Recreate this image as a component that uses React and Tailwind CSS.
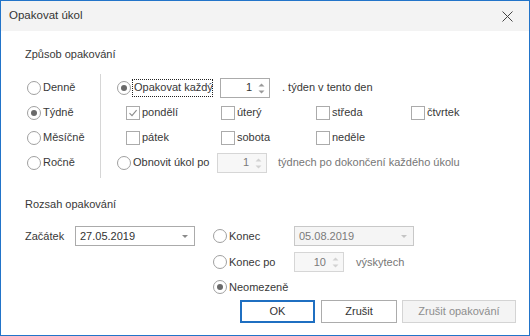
import React from 'react';

// Radio button — gray ring, dark dot when selected
const Radio = ({ checked }) => (
    <span className="flex h-[14px] w-[14px] shrink-0 items-center justify-center rounded-full border border-[#a0a0a0] bg-white">
        {checked && <span className="h-[6px] w-[6px] rounded-full bg-[#6a6a6a]" />}
    </span>
);

const Checkbox = ({ checked }) => (
    <span className="flex h-[14px] w-[14px] shrink-0 items-center justify-center border border-[#ababab] bg-white">
        {checked && (
            <svg width="10" height="10" viewBox="0 0 10 10">
                <path d="M1.5 5.2 L4 7.6 L8.6 2.2" fill="none" stroke="#8c8c8c" strokeWidth="1.1" />
            </svg>
        )}
    </span>
);

const Spinner = ({ value, disabled }) => (
    <div
        className={`relative flex h-[20px] w-[50px] shrink-0 items-center justify-end border pr-[17px] ${
            disabled ? 'border-[#d6d6d6] bg-[#f7f7f7] text-[#7a7a7a]' : 'border-[#ababab] bg-white text-[#333]'
        }`}
    >
        {value}
        <svg className="absolute right-[4px] top-[4px]" width="7" height="11" viewBox="0 0 7 11">
            <path d="M0.5 3.5 L3.5 0.5 L6.5 3.5 Z" fill={disabled ? '#d2d2d2' : '#9a9a9a'} />
            <path d="M0.5 7.5 L3.5 10.5 L6.5 7.5 Z" fill={disabled ? '#d2d2d2' : '#9a9a9a'} />
        </svg>
    </div>
);

const Combo = ({ value, disabled }) => (
    <div
        className={`relative flex h-[20px] w-[120px] shrink-0 items-center border pl-[4px] ${
            disabled ? 'border-[#c8c8c8] bg-[#f5f5f5] text-[#7a7a7a]' : 'border-[#ababab] bg-white text-[#333]'
        }`}
    >
        {value}
        <svg className="absolute right-[6px] top-[8px]" width="6" height="4" viewBox="0 0 6 4">
            <path d="M0 0 L6 0 L3 3 Z" fill={disabled ? '#c4c4c4' : '#8a8a8a'} />
        </svg>
    </div>
);

const days = [
    ['pondělí', true],
    ['úterý', false],
    ['středa', false],
    ['čtvrtek', false],
];
const days2 = ['pátek', 'sobota', 'neděle'];

export default function App() {
    return (
        <div className="flex h-[336px] w-[530px] flex-col whitespace-nowrap border border-[#2274c9] bg-white font-['Liberation_Sans',Arial,sans-serif] text-[11px] text-[#383838]">
            {/* Title bar */}
            <div className="flex h-[30px] shrink-0 items-center justify-between bg-[#f3f3f3] pl-[8px] pr-[16px]">
                <span className="text-[11.5px] text-[#333]">Opakovat úkol</span>
                <svg width="11" height="11" viewBox="0 0 11 11">
                    <path d="M0.5 0.5 L10.5 10.5 M10.5 0.5 L0.5 10.5" stroke="#444" strokeWidth="1" />
                </svg>
            </div>

            <div className="flex flex-col pl-[24px]">
                {/* Způsob opakování */}
                <div className="mt-[15px] h-[16px] leading-[16px]">Způsob opakování</div>

                <div className="mt-[12px] flex">
                    <div className="flex w-[75px] flex-col pt-[1px] pl-[2px]">
                        {[['Denně', false], ['Týdně', true], ['Měsíčně', false], ['Ročně', false]].map(([t, c]) => (
                            <div key={t} className="flex h-[25px] items-center gap-[2px]">
                                <Radio checked={c} />
                                <span>{t}</span>
                            </div>
                        ))}
                    </div>

                    <div className="flex flex-col border-l border-[#d6d6d6] pt-[1px] pb-[3px] pl-[16px]">
                        <div className="flex h-[25px] items-center">
                            <Radio checked />
                            <span className="ml-[1px] flex h-[18px] w-[81px] shrink-0 items-center border border-dotted border-[#222] pl-[1px]">
                                Opakovat každý
                            </span>
                            <div className="ml-[7px]">
                                <Spinner value="1" />
                            </div>
                            <span className="ml-[12px]">. týden v tento den</span>
                        </div>

                        <div className="flex h-[25px] items-center pl-[9px]">
                            {days.map(([d, c]) => (
                                <div key={d} className="flex w-[95px] items-center gap-[2px]">
                                    <Checkbox checked={c} />
                                    <span>{d}</span>
                                </div>
                            ))}
                        </div>

                        <div className="flex h-[25px] items-center pl-[9px]">
                            {days2.map((d) => (
                                <div key={d} className="flex w-[95px] items-center gap-[2px]">
                                    <Checkbox />
                                    <span>{d}</span>
                                </div>
                            ))}
                        </div>

                        <div className="flex h-[25px] items-center">
                            <Radio />
                            <span className="ml-[2px] w-[84px] shrink-0">Obnovit úkol po</span>
                            <Spinner value="1" disabled />
                            <span className="ml-[11px] text-[#767676]">týdnech po dokončení každého úkolu</span>
                        </div>
                    </div>
                </div>

                {/* Rozsah opakování */}
                <div className="mt-[18px] h-[16px] leading-[16px]">Rozsah opakování</div>

                <div className="mt-[11px] flex">
                    <div className="flex h-[26px] items-center">
                        <span className="w-[50px]">Začátek</span>
                        <Combo value="27.05.2019" />
                    </div>

                    <div className="ml-[18px] flex flex-col">
                        <div className="flex h-[26px] items-center">
                            <Radio />
                            <span className="ml-[2px] w-[65px]">Konec</span>
                            <Combo value="05.08.2019" disabled />
                        </div>
                        <div className="flex h-[26px] items-center">
                            <Radio />
                            <span className="ml-[2px] w-[65px]">Konec po</span>
                            <Spinner value="10" disabled />
                            <span className="ml-[12px] text-[#767676]">výskytech</span>
                        </div>
                        <div className="flex h-[24px] items-center">
                            <Radio checked />
                            <span className="ml-[2px]">Neomezeně</span>
                        </div>
                    </div>
                </div>
            </div>

            {/* Buttons */}
            <div className="mt-[1px] flex justify-end pr-[13px]">
                <button className="flex h-[23px] w-[75px] items-center justify-center border-2 border-[#1f6fc1] bg-white text-[#333]">
                    OK
                </button>
                <button className="ml-[6px] flex h-[23px] w-[76px] items-center justify-center border border-[#acacac] bg-white text-[#333]">
                    Zrušit
                </button>
                <button className="ml-[5px] flex h-[23px] w-[114px] items-center justify-center border border-[#d4d4d4] bg-[#f4f4f4] text-[#8e8e8e]">
                    Zrušit opakování
                </button>
            </div>
        </div>
    );
}
